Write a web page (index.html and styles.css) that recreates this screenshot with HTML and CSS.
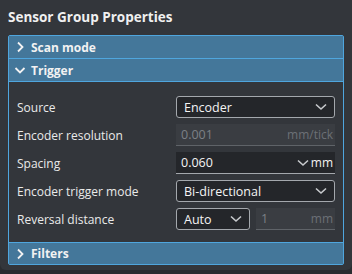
FILE: index.html
```html
<!DOCTYPE html>
<html lang="en">
<head>
    <meta charset="UTF-8">
    <title>Sensor Group Properties</title>
    <link rel="stylesheet" href="styles.css">
</head>
<body>
    <div class="window">
        <h1 class="title">Sensor Group Properties</h1>

        <div class="panel">
            <div class="section-head">
                <svg class="chev" viewBox="0 0 12 12"><path d="M4 1.5 L8.5 6 L4 10.5"/></svg>
                <span>Scan mode</span>
            </div>
            <div class="section-head">
                <svg class="chev" viewBox="0 0 12 12"><path d="M1.5 4 L6 8.5 L10.5 4"/></svg>
                <span>Trigger</span>
            </div>

            <div class="section-body">
                <div class="row">
                    <label>Source</label>
                    <div class="select">
                        <span>Encoder</span>
                        <svg class="arrow" viewBox="0 0 12 8"><path d="M1 1.5 L6 6 L11 1.5"/></svg>
                    </div>
                </div>
                <div class="row">
                    <label>Encoder resolution</label>
                    <div class="input disabled">
                        <span>0.001</span>
                        <span class="unit">mm/tick</span>
                    </div>
                </div>
                <div class="row">
                    <label>Spacing</label>
                    <div class="input active">
                        <span>0.060</span>
                        <span class="unit"><svg class="arrow" viewBox="0 0 12 8"><path d="M1 1.5 L6 6 L11 1.5"/></svg>mm</span>
                    </div>
                </div>
                <div class="row">
                    <label>Encoder trigger mode</label>
                    <div class="select">
                        <span>Bi-directional</span>
                        <svg class="arrow" viewBox="0 0 12 8"><path d="M1 1.5 L6 6 L11 1.5"/></svg>
                    </div>
                </div>
                <div class="row">
                    <label>Reversal distance</label>
                    <div class="pair">
                        <div class="select small">
                            <span>Auto</span>
                            <svg class="arrow" viewBox="0 0 12 8"><path d="M1 1.5 L6 6 L11 1.5"/></svg>
                        </div>
                        <div class="input disabled">
                            <span>1</span>
                            <span class="unit">mm</span>
                        </div>
                    </div>
                </div>
            </div>

            <div class="section-head">
                <svg class="chev" viewBox="0 0 12 12"><path d="M4 1.5 L8.5 6 L4 10.5"/></svg>
                <span>Filters</span>
            </div>
        </div>
    </div>
</body>
</html>
```

FILE: styles.css
```css
* {
    margin: 0;
    padding: 0;
    box-sizing: border-box;
}

body {
    background: #2a2c30;
    font-family: 'Open Sans', 'Noto Sans', sans-serif;
    color: #e8e8e8;
    width: 352px;
    height: 274px;
    overflow: hidden;
}

.window {
    background: #33363b;
    height: 270px;
    padding: 7px 8px 0 8px;
    border-radius: 0 0 6px 6px;
}

.title {
    font-size: 13.5px;
    font-weight: 700;
    color: #f0f0f0;
    line-height: 20px;
    height: 28px;
}

.panel {
    border: 1px solid #4fa6de;
    border-radius: 2px;
    width: 336px;
}

.section-head {
    display: flex;
    align-items: center;
    gap: 5px;
    height: 23px;
    padding-left: 5px;
    background: #44779a;
    border-bottom: 1px solid #4fa6de;
    font-size: 12px;
    font-weight: 700;
    color: #f2f2f2;
}

.section-head:last-child {
    border-bottom: none;
    border-top: 1px solid #4fa6de;
    height: 22px;
}

.chev {
    width: 12px;
    height: 12px;
    fill: none;
    stroke: #f2f2f2;
    stroke-width: 1.8;
}

.section-body {
    padding: 14px 8px 12px 8px;
    display: flex;
    flex-direction: column;
    gap: 6px;
}

.row {
    display: flex;
    align-items: center;
    height: 22px;
    font-size: 12px;
}

.row label {
    width: 159px;
    color: #eaeaea;
}

.select, .input {
    width: 159px;
    height: 22px;
    display: flex;
    align-items: center;
    justify-content: space-between;
    padding: 0 7px;
    font-size: 12.5px;
}

.select {
    background: #24262a;
    border: 1px solid #a4a8ad;
    border-radius: 3px;
    color: #f4f4f4;
}

.arrow {
    width: 12px;
    height: 8px;
    fill: none;
    stroke: #c8cacd;
    stroke-width: 1.6;
}

.input {
    border-bottom: 1px solid #8a8d92;
    padding: 0 2px 0 5px;
}

.input.disabled {
    background: #3a3d42;
    color: #7c8086;
    border-bottom-color: #5f6368;
}

.input.active {
    background: #24262a;
    color: #f4f4f4;
    border-bottom-color: #a4a8ad;
}

.unit {
    display: flex;
    align-items: center;
    gap: 2px;
    font-size: 12px;
}

.input.disabled .unit {
    color: #6c7076;
}

.pair {
    display: flex;
    gap: 6px;
    width: 159px;
}

.select.small {
    width: 74px;
}

.pair .input {
    width: 79px;
}
```
